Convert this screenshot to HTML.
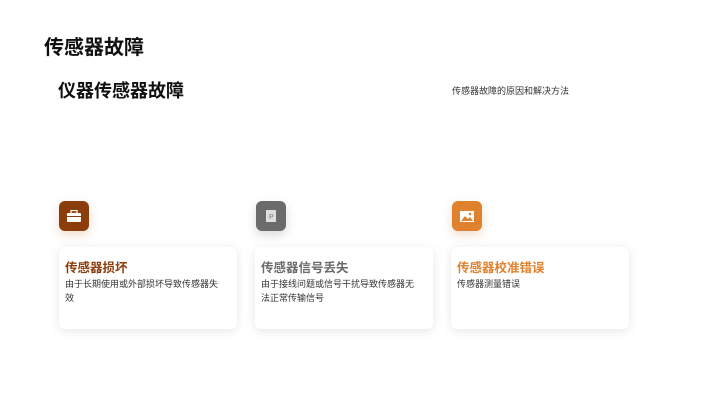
<!DOCTYPE html>
<html><head><meta charset="utf-8"><style>
body{margin:0;width:720px;height:404px;background:#fff;font-family:"Liberation Sans","Noto Sans CJK SC",sans-serif;position:relative;overflow:hidden}
.a{position:absolute}
h1{position:absolute;left:44px;top:31px;margin:0;font-size:20px;font-weight:bold;color:#111}
h2{position:absolute;left:58px;top:77px;margin:0;font-size:18px;font-weight:bold;color:#111}
.sub{left:452px;top:84px;font-size:9px;color:#333}
.ic{width:30px;height:30px;border-radius:6px;top:201px;box-shadow:0 4px 10px rgba(200,120,60,.25);display:flex;align-items:center;justify-content:center}
.card{top:247px;width:178px;height:82px;background:#fff;border-radius:6px;box-shadow:0 2px 10px rgba(0,0,0,.1)}
.t{position:absolute;left:6px;top:10px;font-size:12.5px;font-weight:bold}
.d{position:absolute;left:6px;top:30px;width:156px;font-size:9px;line-height:14px;color:#333}
</style></head><body>
<h1>传感器故障</h1>
<h2>仪器传感器故障</h2>
<div class="a sub">传感器故障的原因和解决方法</div>

<div class="a ic" style="left:59px;background:#8b3e0c"><svg width="16" height="12" viewBox="0 0 16 12"><rect x="1" y="3" width="14" height="9" rx="1" fill="#fff"/><rect x="5" y="0.5" width="6" height="3" fill="none" stroke="#fff" stroke-width="1.2"/><rect x="1" y="6" width="14" height="1" fill="#8b3e0c"/></svg></div>
<div class="a ic" style="left:256px;background:#6b6b6b;box-shadow:0 4px 10px rgba(0,0,0,.15)"><svg width="10" height="12" viewBox="0 0 10 12"><rect width="10" height="12" fill="#ddd"/><text x="3" y="9" font-size="7" fill="#777" font-family="Liberation Sans">P</text></svg></div>
<div class="a ic" style="left:452px;background:#e0812e"><svg width="14" height="11" viewBox="0 0 14 11"><rect width="14" height="11" fill="#fff"/><path d="M1 10L5 5L8 8L10 6L13 10Z" fill="#e0812e"/><circle cx="10" cy="3" r="1.3" fill="#e0812e"/></svg></div>

<div class="a card" style="left:59px"><div class="t" style="color:#8b3e0c">传感器损坏</div><div class="d">由于长期使用或外部损坏导致传感器失效</div></div>
<div class="a card" style="left:255px"><div class="t" style="color:#6b6b6b">传感器信号丢失</div><div class="d">由于接线问题或信号干扰导致传感器无法正常传输信号</div></div>
<div class="a card" style="left:451px"><div class="t" style="color:#e0812e">传感器校准错误</div><div class="d">传感器测量错误</div></div>
</body></html>
